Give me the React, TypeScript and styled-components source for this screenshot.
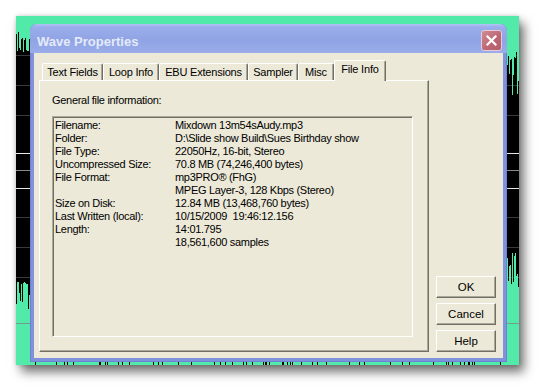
import styled, { createGlobalStyle, css } from "styled-components";

const GlobalStyle = createGlobalStyle`
	html, body {
		margin: 0;
		padding: 0;
		background: #fff;
	}
	body {
		font-family: "Liberation Sans", Arial, sans-serif;
		font-size: 11px;
		color: #000;
	}
`;

const WAVE_W = 503;
const WAVE_H = 349;
const GREEN = "#52eaa8";

// simple seeded random so the wave form is the same on every load
let seed = 12345;
const rnd = () => {
	seed = (seed * 16807) % 2147483647;
	return seed / 2147483647;
};

const buildWave = () => {
	let top = "";
	let bottom = "";
	for (let x = 0; x < WAVE_W; x++) {
		const left = x < 16;
		const right = x >= 488;
		let t = 30;
		let b = 300;
		if (left) {
			t = 16 + 20 * Math.pow(rnd(), 0.9);
			b = 266 + 30 * Math.pow(rnd(), 1.8);
		} else if (right) {
			t = 36 + 46 * Math.pow(rnd(), 1.6);
			b = 232 + 44 * Math.pow(rnd(), 1.4);
		} else {
			b = rnd() < 0.1 ? WAVE_H + 1 : 300;
		}
		top += `M${x + 0.5} 0V${t.toFixed(1)}`;
		bottom += `M${x + 0.5} ${b.toFixed(1)}V${WAVE_H}`;
	}
	return { top, bottom };
};

const wave = buildWave();
const gridLines = [39, 69, 99, 201, 231, 261];

const Page = styled.div`
	width: 543px;
	height: 390px;
	padding: 16px 0 0 16px;
	box-sizing: border-box;
	overflow: hidden;
`;

const Desktop = styled.div`
	position: relative;
	width: ${WAVE_W}px;
	height: ${WAVE_H}px;
	padding: 8px 0 0 14px;
	box-sizing: border-box;
	background: #000;
	box-shadow: 5px 7px 10px rgba(0, 0, 0, 0.55), 0 0 4px rgba(0, 0, 0, 0.18);
`;

const Wave = styled.svg`
	position: absolute;
	left: 0;
	top: 0;
	shape-rendering: crispEdges;
`;

const Window = styled.div`
	position: relative;
	width: 477px;
	height: 338px;
	display: flex;
	flex-direction: column;
	background: #8092dc;
	border-radius: 7px 7px 0 0;
	box-shadow: inset 1px 0 #6f81d3, inset -1px 0 #6f81d3, inset 0 -1px #6f81d3;
`;

const TitleBar = styled.div`
	height: 29px;
	flex-shrink: 0;
	display: flex;
	align-items: flex-start;
	justify-content: space-between;
	padding: 0 5px 0 7px;
	border-radius: 7px 7px 0 0;
	background: linear-gradient(#b3c4f4 0, #9aaeeb 3px, #90a4e5 55%, #9aade9 100%);
`;

const Title = styled.span`
	margin-top: 10px;
	font: bold 13px "Liberation Sans", Arial, sans-serif;
	line-height: 15px;
	color: #e4eafa;
`;

const CloseButton = styled.div`
	margin-top: 6px;
	width: 21px;
	height: 21px;
	box-sizing: border-box;
	display: flex;
	align-items: center;
	justify-content: center;
	border: 1px solid #e4ccd8;
	border-radius: 3px;
	background: linear-gradient(135deg, #cf8a94, #bd6673 60%, #b65f6c);
`;

const Client = styled.div`
	flex: 1;
	margin: 0 4px 4px;
	display: flex;
	gap: 7px;
	padding: 7px 7px 6px 5px;
	background: #ece9d8;
`;

const TabArea = styled.div`
	width: 390px;
	display: flex;
	flex-direction: column;
`;

const TabRow = styled.div`
	position: relative;
	z-index: 1;
	height: 20px;
	display: flex;
	align-items: flex-end;
	padding-left: 3px;
`;

const Tab = styled.div<{ w: number; active?: boolean }>`
	width: ${(p) => p.w}px;
	height: 17px;
	box-sizing: border-box;
	display: flex;
	align-items: center;
	justify-content: center;
	border-top: 1px solid #fff;
	border-left: 1px solid #fff;
	border-right: 1px solid #716f64;
	border-radius: 2px 2px 0 0;
	box-shadow: inset -1px 0 #aca899;
	background: #ece9d8;
	letter-spacing: -0.2px;
	white-space: nowrap;
	${(p) =>
		p.active &&
		css`
			height: 21px;
			margin-bottom: -1px;
			padding-bottom: 5px;
		`}
`;

const Panel = styled.div`
	height: 272px;
	box-sizing: border-box;
	border: 1px solid;
	border-color: #fff #716f64 #716f64 #fff;
	box-shadow: inset -1px -1px #aca899;
	padding: 13px 0 0 12px;
`;

const Caption = styled.div`
	line-height: 13px;
	margin-bottom: 9px;
	letter-spacing: -0.3px;
`;

const InfoBox = styled.div`
	width: 361px;
	height: 221px;
	box-sizing: border-box;
	border: 1px solid;
	border-color: #aca899 #fff #fff #aca899;
	box-shadow: inset 1px 1px #716f64;
	padding: 2px 0 0 2px;
	display: grid;
	grid-template-columns: 120px 1fr;
	grid-auto-rows: 13px;
	align-content: start;
	overflow: hidden;
`;

const Cell = styled.div`
	line-height: 13px;
	white-space: pre;
	letter-spacing: -0.3px;
`;

const ButtonColumn = styled.div`
	align-self: flex-end;
	display: flex;
	flex-direction: column;
	gap: 5px;
`;

const Button = styled.div`
	width: 60px;
	height: 22px;
	box-sizing: border-box;
	display: flex;
	align-items: center;
	justify-content: center;
	border: 1px solid;
	border-color: #fff #716f64 #716f64 #fff;
	box-shadow: inset -1px -1px #aca899;
	background: #ece9d8;
	font-size: 11.5px;
`;

const tabs = [
	{ label: "Text Fields", w: 61 },
	{ label: "Loop Info", w: 56 },
	{ label: "EBU Extensions", w: 89 },
	{ label: "Sampler", w: 50 },
	{ label: "Misc", w: 36 },
	{ label: "File Info", w: 52, active: true },
];

const info: [string, string][] = [
	["Filename:", "Mixdown 13m54sAudy.mp3"],
	["Folder:", "D:\\Slide show Build\\Sues Birthday show"],
	["File Type:", "22050Hz, 16-bit, Stereo"],
	["Uncompressed Size:", "70.8 MB (74,246,400 bytes)"],
	["File Format:", "mp3PRO\u00ae (FhG)"],
	["", "MPEG Layer-3, 128 Kbps (Stereo)"],
	["Size on Disk:", "12.84 MB (13,468,760 bytes)"],
	["Last Written (local):", "10/15/2009  19:46:12.156"],
	["Length:", "14:01.795"],
	["", "18,561,600 samples"],
];

const WaveForm = () => (
	<Wave width={WAVE_W} height={WAVE_H} viewBox={`0 0 ${WAVE_W} ${WAVE_H}`}>
		{gridLines.map((y) => (
			<line key={y} x1={0} x2={WAVE_W} y1={y + 0.5} y2={y + 0.5} stroke="#3a3a3a" />
		))}
		<line x1={0} x2={WAVE_W} y1={137.5} y2={137.5} stroke="#e8e8e8" />
		<line x1={0} x2={WAVE_W} y1={154.5} y2={154.5} stroke="#8a8a8a" />
		<line x1={0} x2={WAVE_W} y1={172.5} y2={172.5} stroke="#e8e8e8" />
		<path d={wave.top} stroke={GREEN} strokeWidth={1} />
		<path d={wave.bottom} stroke={GREEN} strokeWidth={1} />
		<line x1={0} x2={WAVE_W} y1={307.5} y2={307.5} stroke="#6f9f8c" />
	</Wave>
);

const App = () => {
	return (
		<Page>
			<GlobalStyle />
			<Desktop>
				<WaveForm />
				<Window>
					<TitleBar>
						<Title>Wave Properties</Title>
						<CloseButton>
							<svg width="11" height="11" viewBox="0 0 11 11">
								<path d="M1.5 1.5L9.5 9.5M9.5 1.5L1.5 9.5" stroke="#fff" strokeWidth="2.2" strokeLinecap="square" />
							</svg>
						</CloseButton>
					</TitleBar>
					<Client>
						<TabArea>
							<TabRow>
								{tabs.map((t) => (
									<Tab key={t.label} w={t.w} active={t.active}>
										{t.label}
									</Tab>
								))}
							</TabRow>
							<Panel>
								<Caption>General file information:</Caption>
								<InfoBox>
									{info.map(([label, value], i) => [
										<Cell key={`l${i}`}>{label}</Cell>,
										<Cell key={`v${i}`}>{value}</Cell>,
									])}
								</InfoBox>
							</Panel>
						</TabArea>
						<ButtonColumn>
							<Button>OK</Button>
							<Button>Cancel</Button>
							<Button>Help</Button>
						</ButtonColumn>
					</Client>
				</Window>
			</Desktop>
		</Page>
	);
};

export default App;
